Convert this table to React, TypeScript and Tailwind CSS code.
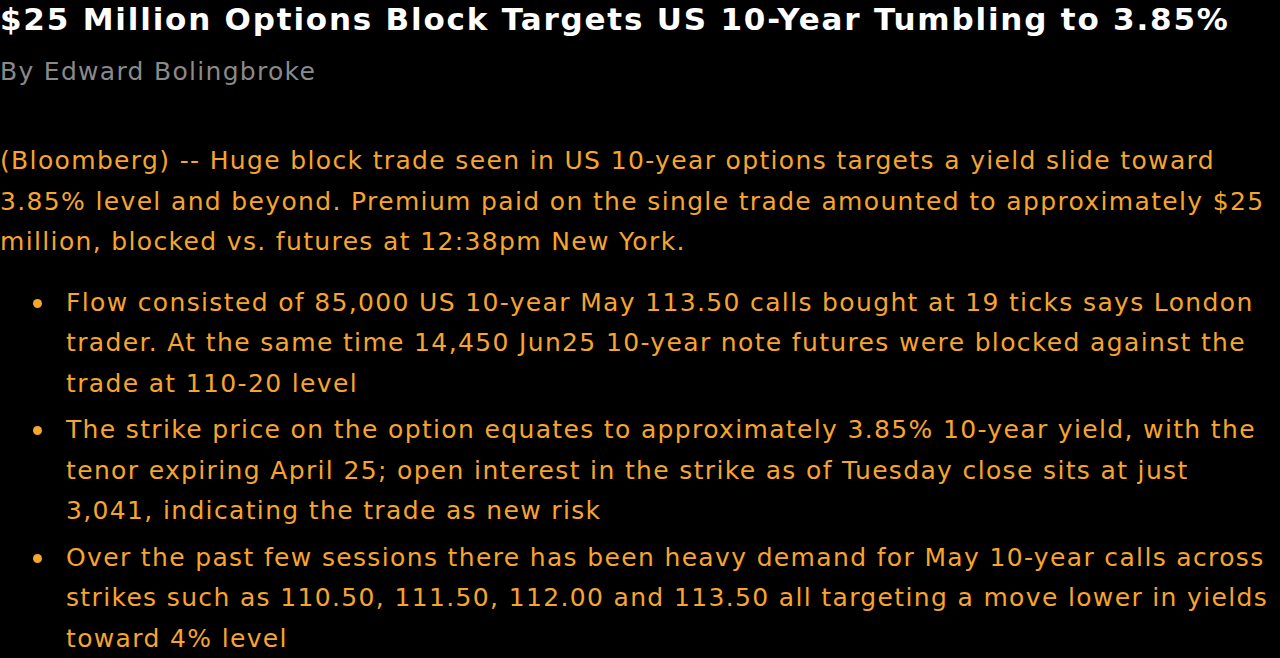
import React from 'react';

const bullets: string[][] = [
  [
    'Flow consisted of 85,000 US 10-year May 113.50 calls bought at 19 ticks says London',
    'trader. At the same time 14,450 Jun25 10-year note futures were blocked against the',
    'trade at 110-20 level',
  ],
  [
    'The strike price on the option equates to approximately 3.85% 10-year yield, with the',
    'tenor expiring April 25; open interest in the strike as of Tuesday close sits at just',
    '3,041, indicating the trade as new risk',
  ],
  [
    'Over the past few sessions there has been heavy demand for May 10-year calls across',
    'strikes such as 110.50, 111.50, 112.00 and 113.50 all targeting a move lower in yields',
    'toward 4% level',
  ],
];

const intro = [
  '(Bloomberg) -- Huge block trade seen in US 10-year options targets a yield slide toward',
  '3.85% level and beyond. Premium paid on the single trade amounted to approximately $25',
  'million, blocked vs. futures at 12:38pm New York.',
];

export default function App() {
  return (
    <div className="w-[1280px] h-[658px] overflow-hidden bg-black font-['DejaVu_Sans',sans-serif]">
      {/* Headline */}
      <h1 className="text-[31px] leading-[38px] tracking-[1.8px] font-bold text-white whitespace-nowrap">
        $25 Million Options Block Targets US 10-Year Tumbling to 3.85%
      </h1>
      <div className="mt-[14px] text-[25px] leading-[40px] tracking-[1.3px] text-[#8a8a8a] whitespace-nowrap">
        By Edward Bolingbroke
      </div>

      {/* Story body */}
      <div className="mt-[49px] text-[25px] leading-[40.5px] tracking-[1.35px] text-[#f6a52e]">
        {intro.map((line) => (
          <div key={line} className="whitespace-nowrap">{line}</div>
        ))}
      </div>

      <ul className="mt-[20px] flex flex-col gap-[6px] text-[25px] leading-[40.5px] tracking-[1.35px] text-[#f6a52e]">
        {bullets.map((item, i) => (
          <li key={i} className="flex">
            <span className="w-[66px] shrink-0 flex justify-center pr-[2px] pt-[16px]">
              <span className="block w-[9px] h-[9px] rounded-full bg-[#f6a52e] ml-[10px]" />
            </span>
            <div>
              {item.map((line) => (
                <div key={line} className="whitespace-nowrap">{line}</div>
              ))}
            </div>
          </li>
        ))}
      </ul>
    </div>
  );
}
